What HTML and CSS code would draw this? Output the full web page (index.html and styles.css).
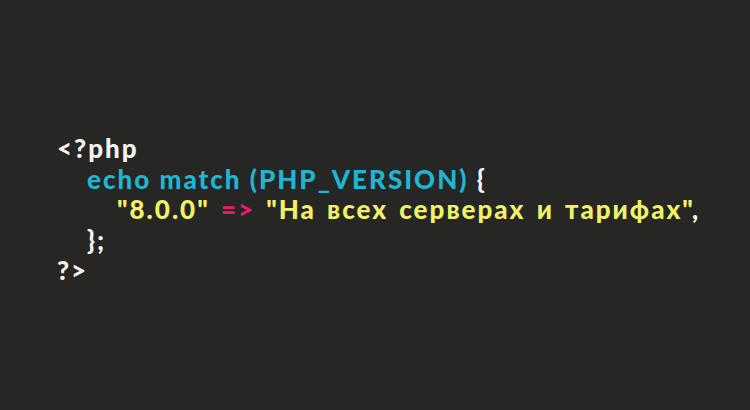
FILE: index.html
```html
<!DOCTYPE html>
<html lang="ru">
<head>
<meta charset="utf-8">
<link rel="stylesheet" href="styles.css">
</head>
<body>
<main class="screen">
  <div class="code">
    <div class="line"><span class="w">&lt;?php</span></div>
    <div class="line i1"><span class="c">echo match (PHP_VERSION)</span><span class="w"> {</span></div>
    <div class="line i2 wide"><span class="y">"8.0.0"</span><span class="p"> =&gt; </span><span class="y">"На всех серверах и тарифах"</span><span class="w">,</span></div>
    <div class="line i1"><span class="w">};</span></div>
    <div class="line"><span class="w">?&gt;</span></div>
  </div>
</main>
</body>
</html>
```

FILE: styles.css
```css
html, body {
  margin: 0;
  padding: 0;
  background: #262624;
}
.screen {
  width: 750px;
  height: 410px;
  background: #262624;
  box-sizing: border-box;
  padding: 133px 0 0 57px;
}
.code {
  font-family: "Lato", sans-serif;
  font-weight: 900;
  font-size: 26px;
  line-height: 30.5px;
  letter-spacing: 2px;
}
.line { white-space: pre; height: 30.5px; }
.i1 { padding-left: 30px; }
.i2 { padding-left: 60px; }
.wide { word-spacing: 3px; }
.w { color: #f4f4f2; }
.c { color: #1fb6d3; }
.y { color: #f1f168; }
.p { color: #ea1a6e; }
```
